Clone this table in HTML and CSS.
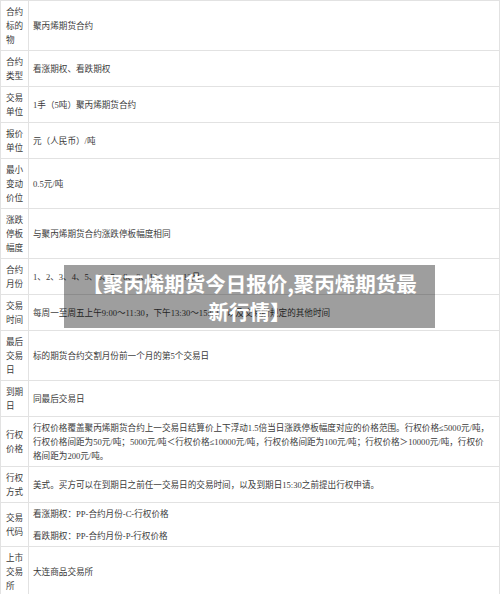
FILE: index.html
```html
<!DOCTYPE html>
<html lang="zh-CN">
<head>
<meta charset="utf-8">
<title>聚丙烯期货今日报价</title>
<link rel="stylesheet" href="styles.css">
</head>
<body>
<div class="page">
  <table class="spec">
    <colgroup><col class="col-label"><col></colgroup>
    <tbody>
      <tr><td class="label">合约标的物</td><td class="value">聚丙烯期货合约</td></tr>
      <tr><td class="label">合约类型</td><td class="value">看涨期权、看跌期权</td></tr>
      <tr><td class="label">交易单位</td><td class="value">1手（5吨）聚丙烯期货合约</td></tr>
      <tr><td class="label">报价单位</td><td class="value">元（人民币）/吨</td></tr>
      <tr><td class="label">最小变动价位</td><td class="value">0.5元/吨</td></tr>
      <tr><td class="label">涨跌停板幅度</td><td class="value">与聚丙烯期货合约涨跌停板幅度相同</td></tr>
      <tr><td class="label">合约月份</td><td class="value">1、2、3、4、5、6、7、8、9、10、11、12月</td></tr>
      <tr><td class="label">交易时间</td><td class="value">每周一至周五上午9:00～11:30，下午13:30～15:00，以及交易所规定的其他时间</td></tr>
      <tr><td class="label">最后交易日</td><td class="value">标的期货合约交割月份前一个月的第5个交易日</td></tr>
      <tr><td class="label">到期日</td><td class="value">同最后交易日</td></tr>
      <tr><td class="label">行权价格</td><td class="value">行权价格覆盖聚丙烯期货合约上一交易日结算价上下浮动1.5倍当日涨跌停板幅度对应的价格范围。行权价格≤5000元/吨，行权价格间距为50元/吨；5000元/吨＜行权价格≤10000元/吨，行权价格间距为100元/吨；行权价格＞10000元/吨，行权价格间距为200元/吨。</td></tr>
      <tr><td class="label">行权方式</td><td class="value">美式。买方可以在到期日之前任一交易日的交易时间，以及到期日15:30之前提出行权申请。</td></tr>
      <tr><td class="label">交易代码</td><td class="value"><p class="code">看涨期权：PP-合约月份-C-行权价格</p><p class="code">看跌期权：PP-合约月份-P-行权价格</p></td></tr>
      <tr><td class="label">上市交易所</td><td class="value">大连商品交易所</td></tr>
    </tbody>
  </table>
  <div class="banner">【聚丙烯期货今日报价,聚丙烯期货最新行情】</div>
</div>
</body>
</html>
```

FILE: styles.css
```css
html, body {
  margin: 0;
  padding: 0;
  background: #ffffff;
}

.page {
  position: relative;
  width: 500px;
  height: 594px;
  overflow: hidden;
}

.spec {
  width: 500px;
  border-collapse: collapse;
  table-layout: fixed;
  font-family: "Liberation Serif", "Noto Sans CJK SC", serif;
  font-size: 8.6px;
  line-height: 14px;
  color: #3a3a3a;
}

.col-label {
  width: 28px;
}

.spec td {
  border: 1px solid #e2e2e2;
  padding: 4px 9px 3px 4px;
  vertical-align: middle;
}

.spec td.label {
  padding-left: 5px;
  padding-right: 2px;
}

.code {
  margin: 0;
}

.code + .code {
  margin-top: 8px;
}

.banner {
  position: absolute;
  left: 64px;
  top: 265px;
  width: 371px;
  height: 63px;
  box-sizing: border-box;
  padding: 4px 16px 0;
  background: rgba(0, 0, 0, 0.38);
  color: #ffffff;
  font-family: "Noto Sans CJK SC", sans-serif;
  font-weight: 700;
  font-size: 20.5px;
  line-height: 28px;
  text-align: center;
}
```
